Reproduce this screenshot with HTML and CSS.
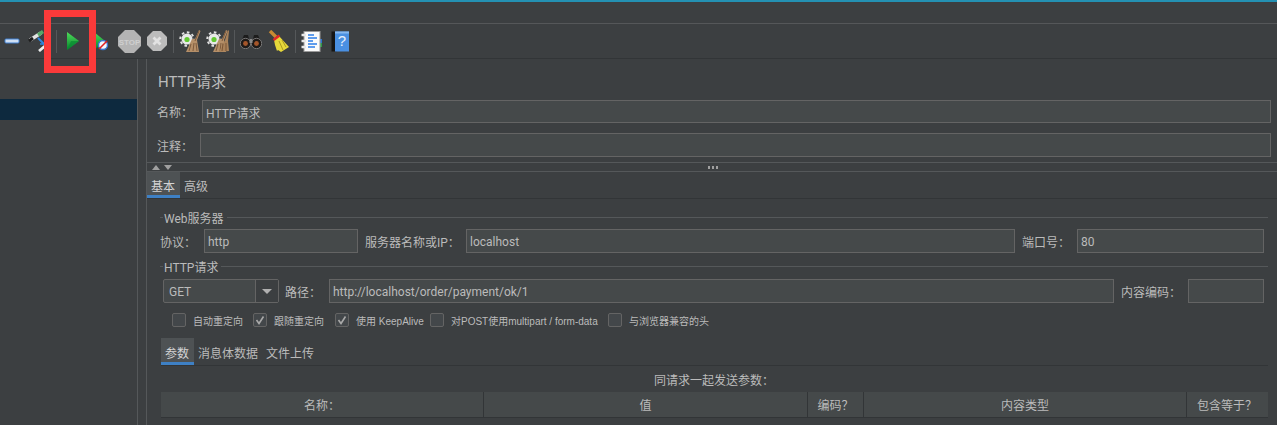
FILE: index.html
```html
<!DOCTYPE html>
<html>
<head>
<meta charset="utf-8">
<title>HTTP请求</title>
<link rel="stylesheet" href="styles.css">
</head>
<body>

<div class="topline"></div>
<div class="menubar"></div>

<div class="toolbar">
    <span class="tool first"><svg width="16" height="6" viewBox="0 0 16 6"><rect x="1" y="1" width="14" height="4" rx="1" fill="#cfe0f5" stroke="#3f7fd0"/></svg></span>
    <span class="tool"><svg width="20" height="22" viewBox="0 0 20 22"><path d="M2 10 L13 3" stroke="#e4e4e4" stroke-width="3.600"/><path d="M10 5 L15 1.500" stroke="#58a868" stroke-width="3.400"/><path d="M1 11 L5 8" stroke="#1e1e1e" stroke-width="3"/><path d="M10 8 L16 14" stroke="#2f86e0" stroke-width="2"/><path d="M12 14 H17 V9" fill="none" stroke="#2f86e0" stroke-width="1.600"/><path d="M11 21 L17 16" stroke="#eeeeee" stroke-width="2.800"/></svg></span>
    <span class="sep first-sep"></span>
    <span class="tool"><svg width="14" height="20" viewBox="0 0 14 20"><defs><linearGradient id="pl" x1="0" y1="0" x2="0" y2="1"><stop offset="0" stop-color="#4fdc5a"/><stop offset="1" stop-color="#05842c"/></linearGradient></defs><path d="M1 1 L13 10 L1 19 Z" fill="url(#pl)"/><path d="M5 10 H13 L1 19 Z" fill="#078a32" opacity="0.700"/></svg></span>
    <span class="tool"><svg width="16" height="20" viewBox="0 0 16 20"><path d="M1 1 L12 10 L1 19 Z" fill="url(#pl)"/><circle cx="10" cy="14" r="4.500" fill="#f4f6fb" stroke="#3a76d0" stroke-width="1.400"/><path d="M6 18 L14 10" stroke="#e02020" stroke-width="1.600"/></svg></span>
    <span class="tool"><svg width="23" height="23" viewBox="0 0 23 23"><path d="M7 0 H16 L23 7 V16 L16 23 H7 L0 16 V7 Z" fill="#b4b4b4"/><text x="11.500" y="14.500" class="stop-text">STOP</text></svg></span>
    <span class="tool"><svg width="20" height="20" viewBox="0 0 20 20"><path d="M6 0 H14 L20 6 V14 L14 20 H6 L0 14 V6 Z" fill="#bcbcbc"/><path d="M6.500 6.500 L13.500 13.500 M13.500 6.500 L6.500 13.500" stroke="#e2e2e2" stroke-width="2.800"/></svg></span>
    <span class="sep"></span>
    <span class="tool"><svg width="22" height="23" viewBox="0 0 22 23"><use href="#gearbroom"/></svg></span>
    <span class="tool"><svg width="24" height="23" viewBox="0 0 24 23"><use href="#gearbroom"/><path d="M19 10 L22 0 L23 1 L22 11 L23 21 L13 22 Z" fill="#a9825a"/><path d="M17 14 L16 21 M20 13 L20 21" stroke="#7a5535"/></svg></span>
    <span class="sep"></span>
    <span class="tool"><svg width="22" height="15" viewBox="0 0 22 15"><path d="M4 1 H8 L9 5 H13 L14 1 H18 L21.500 9 H0.500 Z" fill="#1c1c1c"/><circle cx="5.500" cy="9.500" r="5.200" fill="#1e1a18" stroke="#8a8a8a" stroke-width="0.800"/><circle cx="16.500" cy="9.500" r="5.200" fill="#1e1a18" stroke="#8a8a8a" stroke-width="0.800"/><circle cx="5.500" cy="9.500" r="2.400" fill="#a5562a"/><circle cx="16.500" cy="9.500" r="2.400" fill="#a5562a"/><rect x="9.500" y="5" width="3" height="4" fill="#8c8c8c"/></svg></span>
    <span class="tool"><svg width="22" height="23" viewBox="0 0 22 23"><path d="M2 1 L8 7" stroke="#c98a32" stroke-width="3.400"/><path d="M6 10 L11 6 L21 17 L13 22 L10 20 L9 21 L7 15 Z" fill="#e6d83a"/><path d="M5.500 10 L11.500 5.500" stroke="#e02828" stroke-width="2.600"/><path d="M11 11 L15 20 M14 10 L18 17" stroke="#a89a20"/></svg></span>
    <span class="sep"></span>
    <span class="tool"><svg width="22" height="21" viewBox="0 0 22 21"><rect x="18" y="8" width="3" height="4" fill="#2f74d0"/><rect x="18" y="12" width="3" height="4" fill="#2f9a48"/><rect x="3" y="0.500" width="16" height="20" fill="#fafafa" stroke="#999999"/><path d="M0.500 4 H5 M0.500 10 H5 M0.500 16 H5" stroke="#e8e8e8" stroke-width="2.400"/><path d="M7 4 H13 M7 7 H16 M7 10 H12 M7 13 H16 M7 16 H14" stroke="#2c7de8" stroke-width="1.400"/></svg></span>
    <span class="tool"><svg width="18" height="21" viewBox="0 0 18 21"><rect x="0.500" y="0.500" width="5" height="20" fill="#161616"/><rect x="4" y="0.500" width="14" height="20" fill="#4a90e2"/><rect x="4" y="0.500" width="14" height="2" fill="#86b8f0"/><text x="11" y="15" class="help-text">?</text></svg></span>
</div>

<svg class="defs" width="0" height="0">
    <defs>
        <g id="gearbroom">
            <circle cx="8" cy="9" r="5.500" fill="#e8e8e8"/>
            <circle cx="8" cy="9" r="6.700" fill="none" stroke="#e0e0e0" stroke-width="2" stroke-dasharray="2.600 2.600"/>
            <circle cx="8" cy="9.500" r="2.600" fill="#62c832"/>
            <path d="M20 0 L21.500 1 L18 10 L20 22 L7 22 L13 9 L16 9 Z" fill="#b58f68"/>
            <path d="M20 1 L16 11 M12 14 L10 21 M15 13 L14 21 M17 13 L18 21" stroke="#7d5a3c"/>
        </g>
    </defs>
</svg>

<div class="workspace">
    <div class="tree">
        <div class="tree-row"></div>
    </div>

    <div class="main">
        <div class="title">HTTP请求</div>

        <div class="form-row name-row">
            <label class="name-label">名称：</label>
            <div class="input grow">HTTP请求</div>
        </div>
        <div class="form-row note-row">
            <label class="note-label">注释：</label>
            <div class="input grow"></div>
        </div>

        <div class="splitter">
            <span class="arrow up"></span>
            <span class="arrow down"></span>
            <span class="dots"></span>
        </div>

        <div class="tabs main-tabs">
            <span class="tab active">基本</span>
            <span class="tab">高级</span>
        </div>

        <div class="panel">
            <div class="legend"><span class="legend-text">Web服务器</span></div>
            <div class="fields server-row">
                <label>协议：</label>
                <div class="input protocol">http</div>
                <label>服务器名称或IP：</label>
                <div class="input host">localhost</div>
                <label>端口号：</label>
                <div class="input port">80</div>
            </div>

            <div class="legend second"><span class="legend-text">HTTP请求</span></div>
            <div class="fields path-row">
                <div class="select">
                    <span class="select-value">GET</span>
                    <span class="select-btn"><span class="arrow down big"></span></span>
                </div>
                <label>路径：</label>
                <div class="input path">http://localhost/order/payment/ok/1</div>
                <label>内容编码：</label>
                <div class="input encoding"></div>
            </div>

            <div class="checks">
                <span class="check c1"><span class="box"></span>自动重定向</span>
                <span class="check c2"><span class="box"><svg width="14" height="14" viewBox="0 0 14 14"><path d="M3.500 7 L6 10.500 L10.500 3.500" fill="none" stroke="#a9a9a9" stroke-width="1.600"/></svg></span>跟随重定向</span>
                <span class="check c3"><span class="box"><svg width="14" height="14" viewBox="0 0 14 14"><path d="M3.500 7 L6 10.500 L10.500 3.500" fill="none" stroke="#a9a9a9" stroke-width="1.600"/></svg></span>使用 KeepAlive</span>
                <span class="check c4"><span class="box"></span>对POST使用multipart / form-data</span>
                <span class="check c5"><span class="box"></span>与浏览器兼容的头</span>
            </div>

            <div class="tabs param-tabs">
                <span class="tab active">参数</span>
                <span class="tab">消息体数据</span>
                <span class="tab third">文件上传</span>
            </div>

            <div class="send-title">同请求一起发送参数：</div>

            <div class="table-head">
                <span class="col-name">名称：</span>
                <span class="col-value">值</span>
                <span class="col-enc">编码？</span>
                <span class="col-type">内容类型</span>
                <span class="col-eq">包含等于？</span>
            </div>
        </div>
    </div>
</div>

<div class="highlight"></div>

</body>
</html>
```

FILE: styles.css
```css
html, body {
    margin: 0;
    height: 425px;
    overflow: hidden;
}
body {
    position: relative;
    background: #3c3f41;
    color: #bbbbbb;
    font-family: Roboto, "Noto Sans CJK SC", sans-serif;
    font-size: 12px;
}
.topline {
    height: 2px;
    background: #2491b3;
}
.menubar {
    height: 21px;
    border-bottom: 1px solid #555759;
}
.toolbar {
    display: flex;
    align-items: center;
    height: 34px;
    border-bottom: 1px solid #323537;
}
.tool {
    display: flex;
    flex: none;
    align-items: center;
    justify-content: center;
    width: 28px;
}
.tool.first {
    width: 24px;
}
.sep {
    flex: none;
    width: 1px;
    height: 23px;
    margin: 0 2px;
    background: #55585a;
}
.sep.first-sep {
    margin-left: 4px;
}
.stop-text {
    fill: #cfcfcf;
    font-family: "Liberation Sans", sans-serif;
    font-size: 8px;
    font-weight: bold;
    text-anchor: middle;
}
.help-text {
    fill: #e8f0fb;
    font-family: "Liberation Sans", sans-serif;
    font-size: 15px;
    text-anchor: middle;
}
.defs {
    position: absolute;
}

.workspace {
    display: flex;
    height: 366px;
}
.tree {
    flex: none;
    width: 137px;
    padding-top: 40px;
    border-right: 1px solid #55585a;
}
.tree-row {
    height: 21px;
    background: #0d293e;
}
.main {
    flex: 1;
    margin-left: 8px;
    border-left: 1px solid #55585a;
}
.title {
    height: 23px;
    margin-top: 12px;
    padding-left: 11px;
    font-size: 15px;
    line-height: 23px;
}

.form-row {
    display: flex;
    align-items: center;
    padding-right: 6px;
}
.form-row label {
    flex: none;
    margin-left: 10px;
}
.name-row {
    margin-top: 6px;
}
.name-label {
    width: 45px;
}
.note-row {
    margin-top: 10px;
}
.note-label {
    width: 43px;
}
.name-row .input {
    height: 21px;
    line-height: 26px;
}
.note-row .input {
    height: 22px;
}
.input {
    flex: none;
    box-sizing: content-box;
    height: 22px;
    padding-left: 3px;
    border: 1px solid #646464;
    background: #45494a;
    line-height: 24px;
}
.input.grow {
    flex: 1;
}

.splitter {
    position: relative;
    display: flex;
    align-items: center;
    gap: 4px;
    box-sizing: border-box;
    height: 10px;
    margin-top: 5px;
    padding-left: 5px;
    border-top: 1px solid #55585a;
    border-bottom: 1px solid #55585a;
}
.arrow {
    display: block;
    width: 0;
    height: 0;
    border-left: 4px solid transparent;
    border-right: 4px solid transparent;
}
.arrow.up {
    border-bottom: 5px solid #a0a0a0;
}
.arrow.down {
    border-top: 5px solid #a0a0a0;
}
.arrow.big {
    border-left-width: 5px;
    border-right-width: 5px;
    border-top: 5px solid #b0b0b0;
}
.dots {
    width: 12px;
    height: 3px;
    margin-left: 531px;
    background: radial-gradient(circle, #a0a0a0 1.200px, transparent 1.500px) 0 0 / 4px 3px;
}

.tabs {
    display: flex;
    border-bottom: 1px solid #323537;
}
.main-tabs {
    height: 26px;
}
.tab {
    display: block;
    box-sizing: border-box;
    padding: 0 4px;
    line-height: 31px;
    font-size: 12px;
}
.tab.active {
    padding: 0 5px 0 4px;
    border-bottom: 3px solid #3e80c4;
    background: #4e5254;
    color: #d4d4d4;
}

.panel {
    padding: 0 9px 0 13px;
}
.legend {
    display: flex;
    align-items: center;
    height: 16px;
    margin-top: 10px;
    font-size: 12px;
    line-height: 16px;
}
.legend-text {
    padding-top: 4px;
}
.legend::before {
    content: "";
    width: 3px;
    height: 1px;
    margin-right: 1px;
    background: #55585a;
}
.legend::after {
    content: "";
    flex: 1;
    height: 1px;
    margin-left: 3px;
    background: #55585a;
}
.legend.second {
    margin-top: 5px;
}

.fields {
    display: flex;
    align-items: center;
    margin-top: 4px;
    padding-right: 4px;
}
.fields label {
    flex: none;
}
.server-row label:first-child {
    width: 44px;
}
.protocol {
    width: 149px;
    margin-right: 7px;
}
.server-row label:nth-child(3) {
    width: 101px;
}
.host {
    width: 544px;
    margin-right: 7px;
}
.server-row label:nth-child(5) {
    width: 55px;
}
.port {
    flex: 1;
}
.fields.path-row {
    margin-top: 5px;
    padding-left: 3px;
}
.select {
    display: flex;
    flex: none;
    box-sizing: border-box;
    width: 116px;
    height: 24px;
    margin-right: 6px;
    border: 1px solid #646464;
    border-radius: 2px;
    background: #45494a;
    line-height: 24px;
}
.select-value {
    flex: 1;
    padding-left: 5px;
}
.select-btn {
    display: flex;
    align-items: center;
    justify-content: center;
    width: 22px;
    border-left: 1px solid #646464;
    background: #3c3f41;
}
.path-row label:nth-child(2) {
    width: 44px;
}
.path {
    width: 780px;
    margin-right: 7px;
}
.path-row label:nth-child(4) {
    width: 67px;
}
.encoding {
    flex: 1;
}

.checks {
    display: flex;
    align-items: center;
    height: 14px;
    margin-top: 10px;
    padding-left: 12px;
    font-family: "Liberation Sans", "Noto Sans CJK SC", sans-serif;
    font-size: 10px;
}
.check {
    display: flex;
    flex: none;
    align-items: center;
    gap: 7px;
}
.box {
    display: block;
    box-sizing: border-box;
    width: 14px;
    height: 14px;
    border: 1px solid #646464;
    border-radius: 2px;
    background: #43474a;
}
.box svg {
    display: block;
    margin: -1px;
}
.c1 {
    width: 81px;
}
.c2 {
    width: 82px;
}
.c3 {
    width: 95px;
}
.c4 {
    width: 178px;
}

.param-tabs {
    height: 27px;
    margin-top: 11px;
    margin-left: 1px;
}
.param-tabs .tab {
    line-height: 33px;
}
.param-tabs .tab + .tab {
    padding: 0 0 0 4px;
}
.param-tabs .tab.third {
    padding-left: 8px;
}
.send-title {
    height: 26px;
    line-height: 30px;
    text-align: center;
}
.table-head {
    display: flex;
    height: 25px;
    margin-left: 1px;
    border-bottom: 1px solid #323537;
    background: #45494a;
    line-height: 29px;
    text-align: center;
}
.table-head span {
    box-sizing: border-box;
    flex: none;
    border-right: 1px solid #323537;
}
.col-name {
    width: 323px;
}
.col-value {
    width: 324px;
}
.col-enc {
    width: 56px;
}
.col-type {
    width: 323px;
}
.col-eq {
    width: 80px;
    border-right: none !important;
}

.highlight {
    position: absolute;
    left: 44px;
    top: 10px;
    box-sizing: border-box;
    width: 52px;
    height: 63px;
    border: 7px solid #fb3a3a;
}
```
